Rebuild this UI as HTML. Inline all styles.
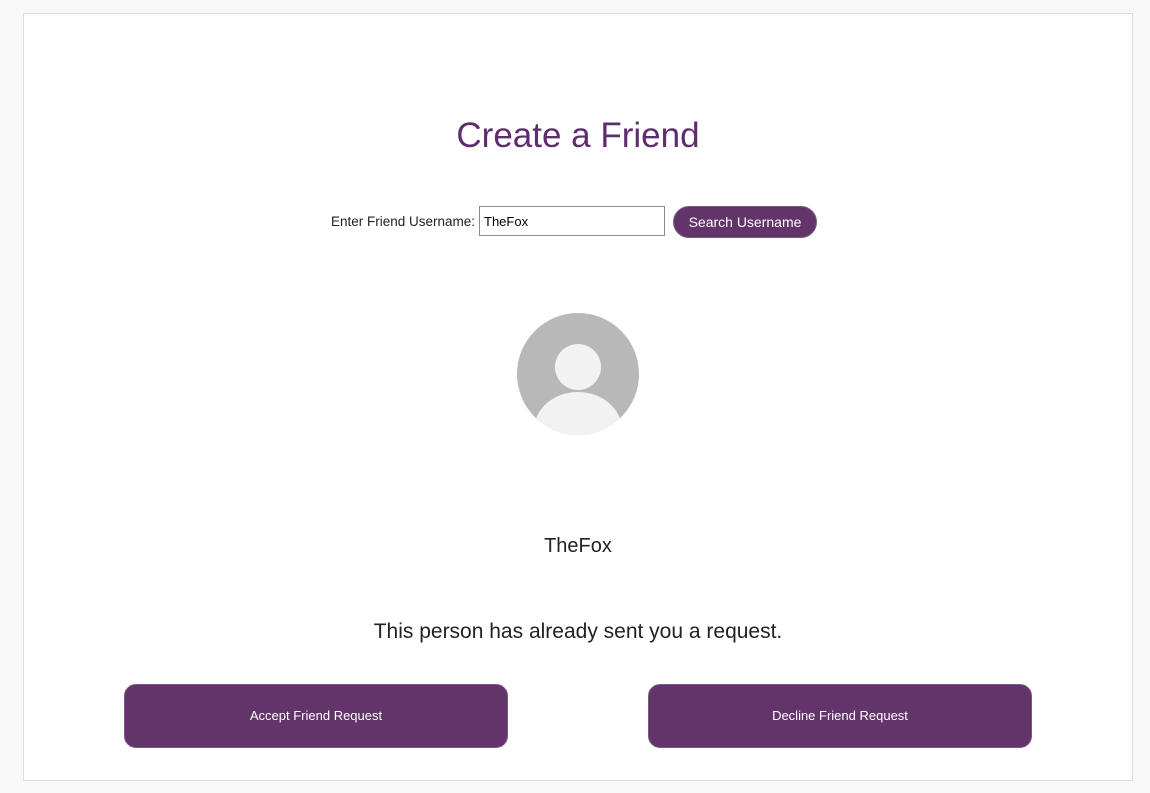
<!DOCTYPE html>
<html><head><style>
body{margin:0;width:1150px;height:793px;background:#f8f8f8;font-family:"Liberation Sans",sans-serif;position:relative;overflow:hidden}
.panel{position:absolute;left:23px;top:13px;width:1108px;height:766px;background:#fff;border:1px solid #ddd}
.a{position:absolute;white-space:nowrap}
.btn{position:absolute;background:#63346a;border:1px solid #7a5a82;color:#fff;text-align:center;box-sizing:border-box}
</style></head><body>
<div class="panel"></div>
<div class="a" style="left:0;width:1156px;text-align:center;top:116px;font-size:35px;color:#5e2d6b">Create a Friend</div>
<div class="a" style="left:331px;top:214px;font-size:13.5px;color:#222">Enter Friend Username:</div>
<div class="a" style="left:479px;top:206px;height:28px;border:1px solid #8a8a9a;box-sizing:content-box;font-size:13px;line-height:29px;padding-left:4px;width:180px;color:#000">TheFox</div>
<div class="btn" style="left:673px;top:206px;width:144px;height:32px;border-radius:16px;font-size:14px;line-height:30px">Search Username</div>
<svg class="a" style="left:516px;top:312px" width="124" height="124" viewBox="0 0 124 124">
<defs><clipPath id="c"><circle cx="62" cy="62" r="61"/></clipPath></defs>
<circle cx="62" cy="62" r="61" fill="#b8b8b8"/>
<g clip-path="url(#c)"><circle cx="62" cy="55" r="23" fill="#f2f2f2"/><ellipse cx="62" cy="118" rx="44" ry="38" fill="#f2f2f2"/></g>
</svg>
<div class="a" style="left:0;width:1156px;text-align:center;top:535px;font-size:20px;color:#222">TheFox</div>
<div class="a" style="left:0;width:1156px;text-align:center;top:620px;font-size:21px;color:#222">This person has already sent you a request.</div>
<div class="btn" style="left:124px;top:684px;width:384px;height:64px;border-radius:12px;font-size:13px;line-height:62px">Accept Friend Request</div>
<div class="btn" style="left:648px;top:684px;width:384px;height:64px;border-radius:12px;font-size:13px;line-height:62px">Decline Friend Request</div>
</body></html>
